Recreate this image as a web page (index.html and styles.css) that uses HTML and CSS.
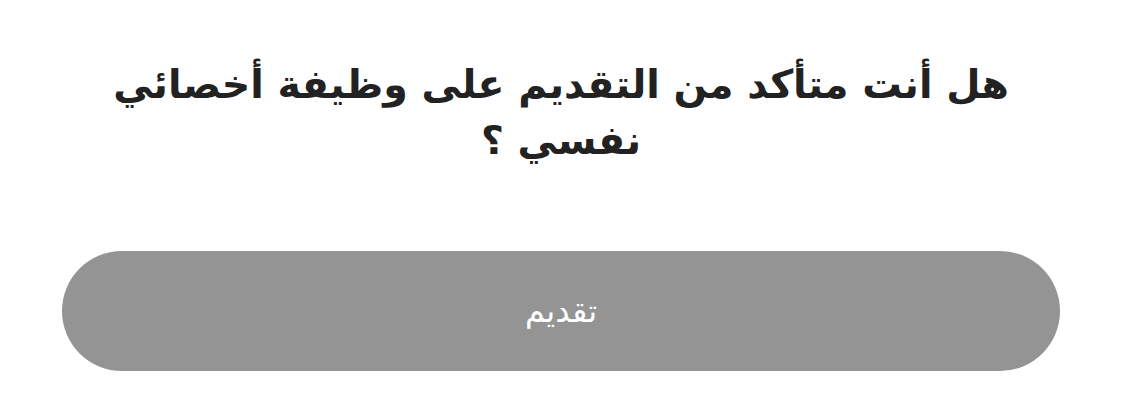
FILE: index.html
```html
<!DOCTYPE html>
<html lang="ar" dir="rtl">
<head>
<meta charset="utf-8">
<link rel="stylesheet" href="styles.css">
</head>
<body>
<div class="page">
  <h1 class="title">هل أنت متأكد من التقديم على وظيفة أخصائي نفسي ؟</h1>
  <button class="submit">تقديم</button>
</div>
</body>
</html>
```
FILE: styles.css
```css
html, body {
  margin: 0;
  padding: 0;
  background: #ffffff;
}
.page {
  display: flex;
  flex-direction: column;
  align-items: center;
  padding: 56px 62px 0;
  font-family: "DejaVu Sans", "Noto Sans", sans-serif;
}
.title {
  margin: 0;
  max-width: 930px;
  text-align: center;
  font-size: 39.5px;
  font-weight: bold;
  line-height: 56px;
  color: #222222;
}
.submit {
  margin-top: 83px;
  width: 100%;
  height: 120px;
  border: none;
  border-radius: 60px;
  background: #949494;
  color: #ffffff;
  font-family: "DejaVu Sans", sans-serif;
  font-size: 32px;
}
```
